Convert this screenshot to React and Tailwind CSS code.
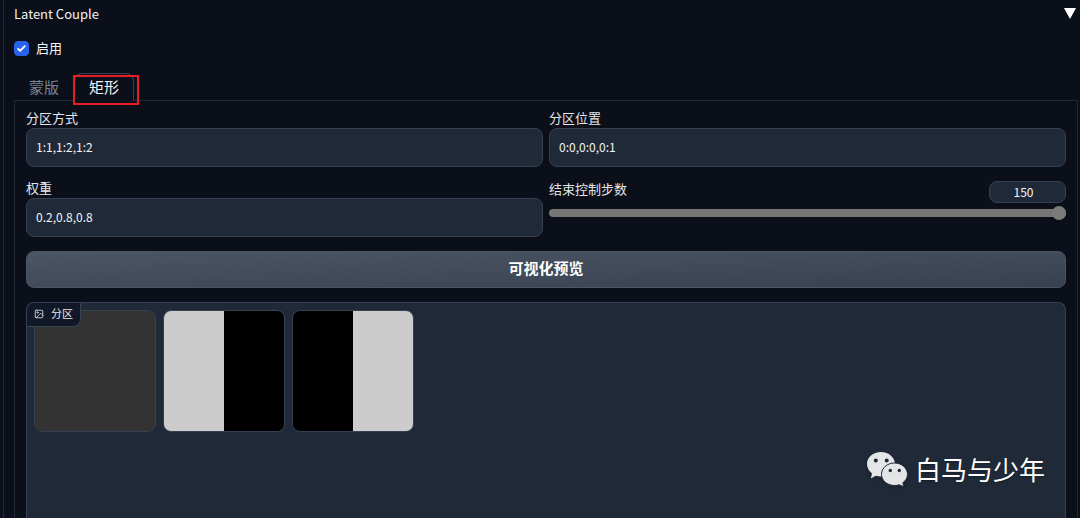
import React, { useState } from "react";

const baseClass =
  "w-full rounded-lg border border-[#374151] bg-[#1f2937] text-gray-100 focus:border-blue-600 focus:outline-none";

function TextInput({ label, name, defaultValue }) {
  return (
    <div>
      <label htmlFor={name} className="block h-[17px] text-[13px] leading-[13px]">
        {label}
      </label>
      <input
        id={name}
        type="text"
        defaultValue={defaultValue}
        className={`${baseClass} block h-[39px] px-[9px] pb-[2px] text-xs`}
      />
    </div>
  );
}

function StepSlider({ label, name, max }) {
  const [value, setValue] = useState(max);
  const onChange = (e) => setValue(e.target.value);

  return (
    <div>
      <div className="flex h-[22px] justify-between">
        <label htmlFor={name} className="text-[13px] leading-[15px]">
          {label}
        </label>
        <input
          type="text"
          inputMode="numeric"
          aria-label={label}
          value={value}
          onChange={onChange}
          className={`${baseClass} h-[22px] max-w-[77px] pb-[2px] pr-2 text-center text-xs`}
        />
      </div>
      <input
        id={name}
        type="range"
        min={0}
        max={max}
        value={value}
        onChange={onChange}
        className="mt-[3px] block h-[14px] w-full appearance-none bg-transparent [&::-webkit-slider-runnable-track]:h-2 [&::-webkit-slider-runnable-track]:rounded-full [&::-webkit-slider-runnable-track]:bg-[#767676] [&::-webkit-slider-thumb]:-mt-[3px] [&::-webkit-slider-thumb]:size-[14px] [&::-webkit-slider-thumb]:appearance-none [&::-webkit-slider-thumb]:rounded-full [&::-webkit-slider-thumb]:bg-[#7b7b7b]"
      />
    </div>
  );
}

function ImageIcon() {
  return (
    <svg
      viewBox="0 0 24 24"
      className="size-[10px]"
      fill="none"
      stroke="currentColor"
      strokeWidth="2"
      strokeLinecap="round"
      strokeLinejoin="round"
    >
      <rect x="3" y="3" width="18" height="18" rx="2" />
      <circle cx="8.5" cy="8.5" r="1.5" />
      <path d="M21 15l-5-5L5 21" />
    </svg>
  );
}

function WechatIcon() {
  return (
    <svg viewBox="0 0 42 36" className="h-9 w-[42px] drop-shadow-sm">
      <path
        fill="#e3e5e7"
        d="M15 1C7 1 1 6.300 1 13c0 4 2 7.200 5 9.400L4.800 27.500l5-2.800c1.700.5 3.400.7 5.200.7 8 0 14-5.400 14-12.100S23 1 15 1z"
      />
      <circle cx="9.800" cy="9.500" r="2" fill="#1f2937" />
      <circle cx="20.700" cy="9.500" r="2" fill="#1f2937" />
      <path
        fill="#e3e5e7"
        stroke="#1f2937"
        strokeWidth="1"
        d="M28.500 12C21.300 12 15.500 17 15.500 23.300s5.800 11.200 13 11.200c1.700 0 3.300-.2 4.700-.7l4.800 2-1.200-4c2.900-2 4.700-5 4.700-8.500C41.500 17 35.700 12 28.500 12z"
      />
      <circle cx="24.300" cy="19.500" r="1.700" fill="#1f2937" />
      <circle cx="33.300" cy="19.500" r="1.700" fill="#1f2937" />
    </svg>
  );
}

const regions = [
  { name: "1:1", left: "bg-[#333333]", right: "bg-[#333333]" },
  { name: "1:2 左", left: "bg-[#cccccc]", right: "bg-black" },
  { name: "1:2 右", left: "bg-black", right: "bg-[#cccccc]" },
];

function Gallery() {
  return (
    <section className="relative flex-1 rounded-t-lg border border-b-0 border-[#374151] bg-[#1f2937] p-[7px]">
      <div className="grid grid-cols-8 gap-[7px]">
        {regions.map((r) => (
          <button
            key={r.name}
            type="button"
            aria-label={r.name}
            className="flex aspect-square overflow-hidden rounded-lg border border-[#374151]"
          >
            <span className={`h-full flex-1 ${r.left}`} />
            <span className={`h-full flex-1 ${r.right}`} />
          </button>
        ))}
      </div>
      <div className="absolute left-0 top-0 flex h-6 items-center gap-[7px] rounded-br-lg rounded-tl-lg border-b border-r border-[#374151] bg-[#111827] pb-[2px] pl-[7px] pr-[7px] text-[11px] text-gray-200">
        <ImageIcon />
        分区
      </div>
      <div className="absolute right-5 top-[146px] flex items-center gap-[7px] text-[26px] leading-10 text-white">
        <WechatIcon />
        <span className="text-shadow-sm">白马与少年</span>
      </div>
    </section>
  );
}

export default function App() {
  const [enabled, setEnabled] = useState(true);

  return (
    <main className="flex min-h-screen bg-[#0b0f19] pl-[3px] font-['Noto_Sans_CJK_SC',sans-serif] text-gray-200">
      <div className="flex flex-1 flex-col border-l border-[#1f2937] pl-[10px] pr-[2px]">
        <button
          type="button"
          className="flex h-[27px] items-center justify-between pr-[2px] text-[13px] text-gray-100"
        >
          Latent Couple
          <svg viewBox="0 0 12 11" className="h-[11px] w-3" fill="white">
            <path d="M0 0h12L6 11z" />
          </svg>
        </button>

        <label className="mt-3 flex h-[18px] items-center gap-[7px] self-start text-[13px] text-gray-100">
          <span className="relative flex">
            <input
              type="checkbox"
              checked={enabled}
              onChange={(e) => setEnabled(e.target.checked)}
              className="size-[15px] appearance-none rounded border border-[#374151] bg-[#1f2937] checked:border-[#2563eb] checked:bg-[#2563eb]"
            />
            {enabled && (
              <svg viewBox="0 0 16 16" className="pointer-events-none absolute inset-0 size-[15px]" fill="white">
                <path d="M12.207 4.793a1 1 0 010 1.414l-5 5a1 1 0 01-1.414 0l-2-2a1 1 0 011.414-1.414L6.500 9.086l4.293-4.293a1 1 0 011.414 0z" />
              </svg>
            )}
          </span>
          启用
        </label>

        <div role="tablist" className="mt-4 -mb-px flex h-7 text-[15px]">
          <button type="button" role="tab" aria-selected={false} className="px-[15px] text-[#7c8390]">
            蒙版
          </button>
          <div className="relative flex">
            <button
              type="button"
              role="tab"
              aria-selected={true}
              className="rounded-t-lg border border-b-0 border-[#374151] bg-[#0b0f19] px-[14px] text-gray-100"
            >
              矩形
            </button>
            {/* red marker around the active tab */}
            <div className="pointer-events-none absolute -bottom-1 -left-px -right-[5px] top-[2px] border-2 border-[#ec1c24]" />
          </div>
        </div>

        <div className="flex flex-1 flex-col gap-[14px] border border-b-0 border-[#1f2937] px-[11px] pt-[10px]">
          <div className="grid grid-cols-2 gap-x-[6px] gap-y-[14px]">
            <TextInput label="分区方式" name="divisions" defaultValue="1:1,1:2,1:2" />
            <TextInput label="分区位置" name="positions" defaultValue="0:0,0:0,0:1" />
            <TextInput label="权重" name="weights" defaultValue="0.2,0.8,0.8" />
            <StepSlider label="结束控制步数" name="end-step" max={150} />
          </div>
          <button
            type="button"
            className="h-[37px] shrink-0 rounded-lg border border-[#4b5563] bg-linear-to-br from-[#4b5563] to-[#374151] pb-[2px] text-[15px] font-bold text-white"
          >
            可视化预览
          </button>
          <Gallery />
        </div>
      </div>
    </main>
  );
}
